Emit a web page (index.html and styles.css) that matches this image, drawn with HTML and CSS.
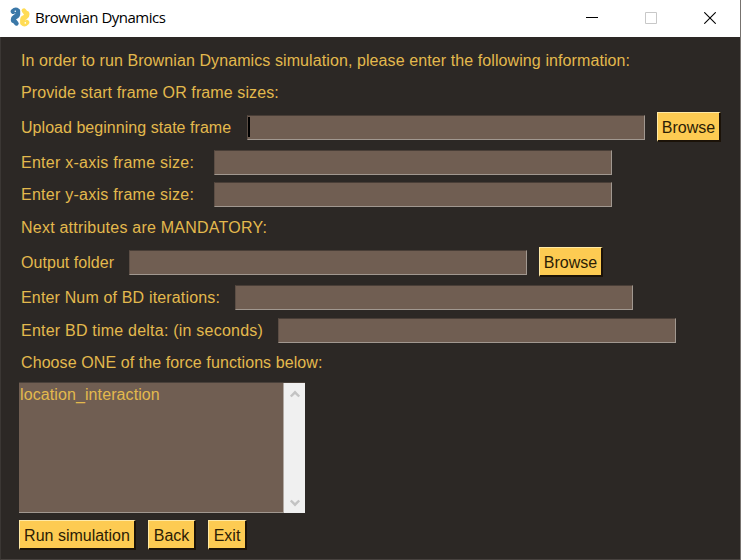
FILE: index.html
```
<!DOCTYPE html>
<html lang="en">
<head>
<meta charset="utf-8">
<title>Brownian Dynamics</title>
<link rel="stylesheet" href="styles.css">
</head>
<body>
<div class="window">
  <header class="titlebar">
    <svg class="logo" width="20" height="20" viewBox="0 0 20 20">
      <g fill="none" stroke-linecap="round" stroke-linejoin="round" stroke-width="5">
        <path stroke="#3b78a8" d="M3.200 4.400Q5.500 2.200 7.700 4V7.300Q7.500 9 5.800 9.500L4.500 10.300Q3 11.200 3.400 13.500"/>
        <path stroke="#3b78a8" stroke-width="4.600" d="M3.600 13L6.400 16.400"/>
        <path stroke="#ffdc55" d="M16.800 15.400Q14.500 17.800 12.600 16V12.700Q12.800 11 14.500 10.500L15.800 9.700Q17.300 8.800 16.900 6.500"/>
        <path stroke="#ffdc55" stroke-width="4.600" d="M16.500 7L13.900 3.600"/>
      </g>
      <circle cx="5.300" cy="4.200" r=".8" fill="#fff"/>
      <circle cx="15.300" cy="15.900" r=".8" fill="#fff"/>
    </svg>
    <h1 class="title">Brownian Dynamics</h1>
    <div class="controls">
      <svg width="12" height="12" viewBox="0 0 12 12"><path d="M0 5.500h12" stroke="#000"/></svg>
      <svg width="12" height="12" viewBox="0 0 12 12"><path d="M.5.5h11v11H.5z" fill="none" stroke="#c8c8c8"/></svg>
      <svg width="12" height="12" viewBox="0 0 12 12"><path d="M.3.3l11.400 11.400M11.700.3L.3 11.700" stroke="#000" stroke-width="1.100"/></svg>
    </div>
  </header>
  <main class="form">
    <p class="row"><span class="t-intro">In order to run Brownian Dynamics simulation, please enter the following information:</span></p>
    <p class="row"><span class="t-provide">Provide start frame OR frame sizes:</span></p>
    <div class="row"><label class="label-upload"><span class="t-upload">Upload beginning state frame</span></label><div class="field focused"></div><button class="btn browse">Browse</button></div>
    <div class="row"><label class="label-axis"><span class="t-axis">Enter x-axis frame size:</span></label><div class="field"></div></div>
    <div class="row"><label class="label-axis low"><span class="t-axis">Enter y-axis frame size:</span></label><div class="field"></div></div>
    <p class="row low"><span class="t-next">Next attributes are MANDATORY:</span></p>
    <div class="row"><label class="label-output"><span class="t-output">Output folder</span></label><div class="field"></div><button class="btn browse">Browse</button></div>
    <div class="row"><label class="label-num"><span class="t-num">Enter Num of BD iterations:</span></label><div class="field"></div></div>
    <div class="row"><label class="label-delta low"><span class="t-delta">Enter BD time delta: (in seconds)</span></label><div class="field"></div></div>
    <p class="row"><span class="t-choose">Choose ONE of the force functions below:</span></p>
    <div class="list">
      <div class="items"><span class="t-item">location_interaction</span></div>
      <div class="scrollbar">
        <svg width="12" height="10" viewBox="0 0 12 10"><path d="M1.800 7.500L6 3.300l4.200 4.200" fill="none" stroke="#c3c3c3" stroke-width="2.400"/></svg>
        <svg width="12" height="10" viewBox="0 0 12 10"><path d="M1.800 2.500L6 6.700l4.200-4.200" fill="none" stroke="#c3c3c3" stroke-width="2.400"/></svg>
      </div>
    </div>
    <div class="actions"><button class="btn run">Run simulation</button><button class="btn back">Back</button><button class="btn exit">Exit</button></div>
  </main>
</div>
</body>
</html>
```
FILE: styles.css
```
* { box-sizing: border-box; }
body { margin: 0; background: #2c2825; }
.window {
  width: 741px; height: 560px; overflow: hidden;
  display: flex; flex-direction: column;
  font-family: "Liberation Sans", Arial, sans-serif; font-size: 16px;
  color: #e3b94d; background: #2c2825;
  border-right: 1px solid #77736f;
}
.titlebar { height: 37px; flex: none; display: flex; align-items: center; padding: 0 24px 2px 10px; background: #fff; }
.logo { margin: -1px 5px 0 0; flex: none; }
.title { margin: -1px 0 0; font: 400 15px/20px "Open Sans", sans-serif; color: #000; letter-spacing: -0.5px; white-space: nowrap; }
.controls { margin-left: auto; display: flex; gap: 47px; }
.form {
  flex: 1; display: grid; row-gap: 7px;
  padding: 11px 0 0 18px; border-left: 1px solid #3b3734; border-bottom: 1px solid #47423f;
  grid-template-rows: 25px 25px 31px 25px 25px 26px 31px 25px 26px 25px 131px 30px;
}
.row { margin: 0; padding-left: 2px; display: flex; align-items: center; white-space: nowrap; }
.low { padding-top: 1px; }
.t-intro { letter-spacing: 0.093px; }
.t-provide { letter-spacing: 0.1px; }
.t-upload { letter-spacing: 0.04px; }
.t-axis { letter-spacing: 0.25px; }
.t-next { letter-spacing: 0.23px; }
.t-output { letter-spacing: 0.05px; }
.t-num { letter-spacing: 0.16px; }
.t-delta { letter-spacing: 0.22px; }
.t-choose { letter-spacing: 0.09px; }
.t-item { letter-spacing: 0.1px; }
.label-upload { width: 226px; }
.label-axis { width: 193px; }
.label-output { width: 108px; }
.label-num { width: 214px; }
.label-delta { width: 257px; }
.field { width: 398px; height: 25px; background: #705e52; border: 1px solid; border-color: #493e37 #a19890 #a19890 #5c4e45; }
.focused { padding: 1px 0; }
.focused::before { content: ""; display: block; width: 2px; height: 20px; background: #000; }
.btn {
  flex: none; height: 30px; padding: 2px 0 0; text-align: center; white-space: nowrap;
  font: inherit; color: #2c1d05; background: #fdcb52;
  border: 1px solid; border-width: 1px 2px 2px 1px; border-color: #ffe9a5 #1b1208 #1b1208 #ffe9a5;
}
.browse { width: 64px; margin-left: 12px; align-self: flex-start; }
.list { width: 286px; display: flex; border-top: 1px solid #49403a; }
.items { width: 265px; padding: 3px 0 0 1px; line-height: 18px; background: #705e52; border-right: 1px solid #b1a9a3; border-bottom: 1px solid #a19890; }
.scrollbar { width: 21px; padding: 6px 0 5px; display: flex; flex-direction: column; align-items: center; justify-content: space-between; background: #f0f0f0; }
.actions { display: flex; gap: 12px; }
.run { width: 117px; }
.back { width: 48px; }
.exit { width: 39px; }
```
